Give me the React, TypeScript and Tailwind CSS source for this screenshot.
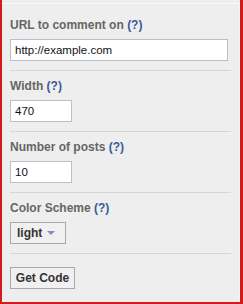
import React from "react";

const Label = ({ text }: { text: string }) => (
  <div className="text-[12px] font-bold leading-[15px] h-[15px] text-[#666666]">
    {text} <span className="text-[#3b5998]">(?)</span>
  </div>
);

const inputCls =
  "mt-[6px] h-[22px] bg-white border border-[#b9bfcc] px-[4px] text-[11.5px] text-[#111] outline-none block";

export default function App() {
  return (
    <div
      className="w-[243px] h-[304px] bg-[#d21c1c] pl-[2px] pr-[3px] pb-[2px] overflow-hidden"
      style={{ fontFamily: "'Liberation Sans', Arial, sans-serif" }}
    >
      <div className="h-full bg-[#eeeeee] pt-[3px]">
        <div className="h-full border-t border-r border-[#f9f9f9] pl-[8px] pr-[8px]">
          <div className="pt-[14px] pb-[9px] border-b border-[#d6d6d6]">
            <Label text="URL to comment on" />
            <input readOnly value="http://example.com" className={`${inputCls} w-[218px]`} />
          </div>
          <div className="pt-[8px] pb-[9px] border-b border-[#d6d6d6]">
            <Label text="Width" />
            <input readOnly value="470" className={`${inputCls} w-[62px]`} />
          </div>
          <div className="pt-[8px] pb-[9px] border-b border-[#d6d6d6]">
            <Label text="Number of posts" />
            <input readOnly value="10" className={`${inputCls} w-[62px]`} />
          </div>
          <div className="pt-[8px] pb-[9px] border-b border-[#d6d6d6]">
            <Label text="Color Scheme" />
            <div className="mt-[6px] w-[56px] h-[22px] bg-[#f0f0f0] border border-[#a8a8a8] flex items-center pl-[6px] gap-[5px]">
              <span className="text-[12px] font-bold text-[#333]">light</span>
              <svg width="8" height="4" viewBox="0 0 8 4">
                <path d="M0 0 H8 L4 4 Z" fill="#7f8fb0" />
              </svg>
            </div>
          </div>
          <div className="pt-[13px]">
            <button className="w-[65px] h-[22px] bg-[#f0f0f0] border border-[#a8a8a8] text-[12px] font-bold text-[#333] flex items-center justify-center">
              Get Code
            </button>
          </div>
        </div>
      </div>
    </div>
  );
}
